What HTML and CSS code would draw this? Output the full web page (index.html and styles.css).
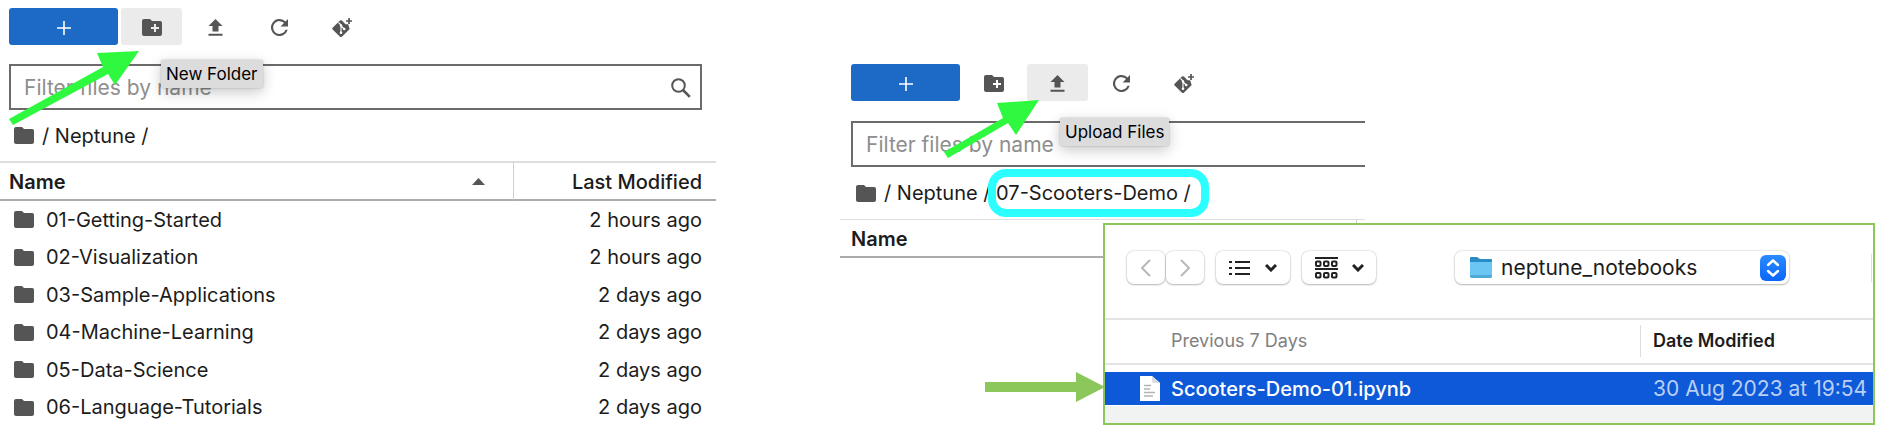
FILE: index.html
```html
<!DOCTYPE html>
<html lang="en">
<head>
<meta charset="utf-8">
<title>Neptune notebooks</title>
<link rel="stylesheet" href="styles.css">
</head>
<body>
<svg class="defs" aria-hidden="true">
  <symbol id="folder" viewBox="0 0 20 17"><path d="M2 0H8L10 2H18.200Q20 2 20 3.800V15Q20 17 18 17H2Q0 17 0 15V2Q0 0 2 0Z"/></symbol>
  <symbol id="new-folder" viewBox="0 0 20 17"><path fill-rule="evenodd" d="M2 0H8L10 2H18.200Q20 2 20 3.800V15Q20 17 18 17H2Q0 17 0 15V2Q0 0 2 0ZM12 5V8H9V10H12V13H14V10H17V8H14V5Z"/></symbol>
  <symbol id="upload" viewBox="0 0 15 17"><path d="M4.500 12.500V7H0.500L7.500 0L14.500 7H10.500V12.500ZM0.500 14.800H14.500V16.800H0.500Z"/></symbol>
  <symbol id="refresh" viewBox="4 4 16 16"><path d="M17.650 6.350A8 8 0 1 0 19.730 14H17.650A6 6 0 1 1 12 6c1.660 0 3.140.690 4.220 1.780L13 11h7V4z"/></symbol>
  <symbol id="git" viewBox="0 0 23 20"><path d="M8 2.600Q9 1.800 9.900 2.600L13.500 6.200H16.200L17.200 9.800Q18 10.700 17.200 11.600L9.900 18.800Q9 19.600 8 18.800L.6 11.500Q-.2 10.600 .6 9.700Z"/><path d="M6.500 4.500L9 7V15M9.200 8L12.200 11" fill="none" stroke="#fff" stroke-width="1.100"/><circle cx="9" cy="7.500" r="1.200" fill="#fff"/><circle cx="9" cy="14.800" r="1.300" fill="#fff"/><circle cx="12.200" cy="11" r="1.300" fill="#fff"/><path d="M16.200 0H17.900V2.200H20V3.800H17.900V6H16.200V3.800H14V2.200H16.200Z"/></symbol>
</svg>
<main class="stage">
  <section class="browser">
    <div class="toolbar">
      <button class="tool primary" aria-label="New launcher"><svg width="14" height="14" viewBox="0 0 14 14"><path d="M7 0V14M0 7H14" fill="none" stroke="#fff" stroke-width="1.600"/></svg></button>
      <button class="tool active" aria-label="New Folder"><svg width="20" height="17"><use href="#new-folder"/></svg></button>
      <button class="tool" aria-label="Upload Files"><svg width="15" height="17"><use href="#upload"/></svg></button>
      <button class="tool" aria-label="Refresh"><svg width="17" height="17"><use href="#refresh"/></svg></button>
      <button class="tool" aria-label="Git clone"><svg width="23" height="20"><use href="#git"/></svg></button>
    </div>
    <div class="filter">
      <input type="text" placeholder="Filter files by name" aria-label="Filter files by name">
      <svg class="lens" width="20" height="20" viewBox="0 0 20 20"><circle cx="7.500" cy="7.500" r="6.300" fill="none" stroke="#555" stroke-width="2"/><path d="M12 12L18.800 18.800" stroke="#555" stroke-width="2.600"/></svg>
    </div>
    <nav class="crumbs"><svg width="20" height="17"><use href="#folder"/></svg><span>/ Neptune /</span></nav>
    <table class="files">
      <thead><tr><th class="name"><div class="sort"><span>Name</span><svg width="13" height="7" viewBox="0 0 13 7"><path d="M0 7L6.500 0L13 7Z"/></svg></div></th><th class="date">Last Modified</th></tr></thead>
      <tbody>
        <tr><td><div class="file"><svg width="20" height="17"><use href="#folder"/></svg>01-Getting-Started</div></td><td class="date">2 hours ago</td></tr>
        <tr><td><div class="file"><svg width="20" height="17"><use href="#folder"/></svg>02-Visualization</div></td><td class="date">2 hours ago</td></tr>
        <tr><td><div class="file"><svg width="20" height="17"><use href="#folder"/></svg>03-Sample-Applications</div></td><td class="date">2 days ago</td></tr>
        <tr><td><div class="file"><svg width="20" height="17"><use href="#folder"/></svg>04-Machine-Learning</div></td><td class="date">2 days ago</td></tr>
        <tr><td><div class="file"><svg width="20" height="17"><use href="#folder"/></svg>05-Data-Science</div></td><td class="date">2 days ago</td></tr>
        <tr><td><div class="file"><svg width="20" height="17"><use href="#folder"/></svg>06-Language-Tutorials</div></td><td class="date">2 days ago</td></tr>
      </tbody>
    </table>
    <div class="tooltip tip-folder" role="tooltip">New Folder</div>
    <svg class="pointer pointer-folder" width="132" height="80" viewBox="0 0 132 80"><path d="M-1 70L93 18L87 4L129 2L105 36L98 25L3 76Z"/></svg>
  </section>

  <div class="demo">
    <section class="browser cropped">
      <div class="toolbar">
        <button class="tool primary" aria-label="New launcher"><svg width="14" height="14" viewBox="0 0 14 14"><path d="M7 0V14M0 7H14" fill="none" stroke="#fff" stroke-width="1.600"/></svg></button>
        <button class="tool" aria-label="New Folder"><svg width="20" height="17"><use href="#new-folder"/></svg></button>
        <button class="tool active" aria-label="Upload Files"><svg width="15" height="17"><use href="#upload"/></svg></button>
        <button class="tool" aria-label="Refresh"><svg width="17" height="17"><use href="#refresh"/></svg></button>
        <button class="tool" aria-label="Git clone"><svg width="23" height="20"><use href="#git"/></svg></button>
      </div>
      <div class="filter"><input type="text" placeholder="Filter files by name" aria-label="Filter files by name"></div>
      <nav class="crumbs"><svg width="20" height="17"><use href="#folder"/></svg><span>/ Neptune / <span class="current">07-Scooters-Demo /</span></span></nav>
      <table class="files">
        <thead><tr><th class="name">Name</th><th class="rest"></th></tr></thead>
      </table>
    </section>
    <div class="tooltip tip-upload" role="tooltip">Upload Files</div>
    <svg class="pointer pointer-upload" width="98" height="60" viewBox="0 0 98 60"><path d="M1 53L60 19L54 4L96 1L73 36L65 24L5 59Z"/></svg>

    <section class="dialog" aria-label="Choose a file">
      <div class="dialog-bar">
        <div class="history">
          <button class="mac" aria-label="Back"><svg width="10" height="18" viewBox="0 0 10 18"><path d="M9 1L1 9L9 17" class="faint"/></svg></button>
          <button class="mac" aria-label="Forward"><svg width="10" height="18" viewBox="0 0 10 18"><path d="M1 1L9 9L1 17" class="faint"/></svg></button>
        </div>
        <button class="mac wide" aria-label="List view">
          <svg width="22" height="16" viewBox="0 0 22 16"><path d="M6 2H21M6 8H21M6 14H21M0 2H3M0 8H3M0 14H3" class="stroke"/></svg>
          <svg width="12" height="8" viewBox="0 0 12 8"><path d="M1 1L6 6L11 1" class="chevron"/></svg>
        </button>
        <button class="mac wide" aria-label="Group items">
          <svg width="23" height="22" viewBox="0 0 23 22"><path d="M0 1H23M0 12H23" class="stroke"/><g class="cells"><rect x="1" y="4.500" width="4.500" height="4.500" rx="1"/><rect x="9" y="4.500" width="4.500" height="4.500" rx="1"/><rect x="17" y="4.500" width="4.500" height="4.500" rx="1"/><rect x="1" y="16" width="4.500" height="4.500" rx="1"/><rect x="9" y="16" width="4.500" height="4.500" rx="1"/><rect x="17" y="16" width="4.500" height="4.500" rx="1"/></g></svg>
          <svg width="12" height="8" viewBox="0 0 12 8"><path d="M1 1L6 6L11 1" class="chevron"/></svg>
        </button>
        <div class="place">
          <select aria-label="Folder"><option>neptune_notebooks</option></select>
          <svg class="place-folder" width="24" height="23" viewBox="0 0 24 23"><path d="M1 2Q1 1 2 1H8L11 3H22Q23 3 23 4V10H1Z" fill="#2a8cc4"/><path d="M1 6H23V20Q23 22 21 22H3Q1 22 1 20Z" fill="#6cc6f3"/><path d="M1 19H23V20Q23 22 21 22H3Q1 22 1 20Z" fill="#4ea9d6"/></svg>
          <svg class="place-arrows" width="26" height="26" viewBox="0 0 26 26"><defs><linearGradient id="blue" x2="0" y2="1"><stop stop-color="#2b8bff"/><stop offset="1" stop-color="#0a66f8"/></linearGradient></defs><rect width="26" height="26" rx="6" fill="url(#blue)"/><path d="M8 10L13 5.500L18 10M8 16L13 20.500L18 16" fill="none" stroke="#fff" stroke-width="2.400" stroke-linecap="round" stroke-linejoin="round"/></svg>
        </div>
        <div class="search-edge"></div>
      </div>
      <table class="picker">
        <thead><tr><th class="group">Previous 7 Days</th><th class="modified"><div>Date Modified</div></th></tr></thead>
        <tbody><tr><td><div class="picked"><svg width="20" height="25" viewBox="0 0 20 25"><path d="M0 0H12L20 7V25H0Z" fill="#fff"/><path d="M12 0V5Q12 7 14 7H20Z" fill="#d9dde2"/><path d="M4 9.500H11M4 13H10M4 16.500H15M4 20H13" stroke="#b3b3b3" stroke-width="1.300"/></svg>Scooters-Demo-01.ipynb</div></td><td class="when">30 Aug 2023 at 19:54</td></tr></tbody>
      </table>
      <div class="stripe"></div>
      <svg class="callout" width="120" height="30" viewBox="0 0 120 30"><path d="M0 10H91V0L120 15L91 30V20H0Z"/></svg>
    </section>
  </div>
</main>
</body>
</html>
```

FILE: styles.css
```css
* { box-sizing: border-box; }
body {
  margin: 0;
  background: #fff;
  color: #1c1c1c;
  font: 20px/24px Inter, "Liberation Sans", sans-serif;
}
svg { display: block; flex: none; }
.defs { position: absolute; width: 0; height: 0; }
button, input, select { font: inherit; color: inherit; margin: 0; }
table { border-collapse: separate; border-spacing: 0; width: 100%; }
th, td { padding: 0; text-align: left; }

.stage {
  display: grid;
  grid-template-columns: 716fr 1046fr;
  column-gap: 124px;
  overflow: hidden;
}
.browser { position: relative; padding-top: 8px; }
.toolbar { display: flex; gap: 3px; padding-left: 9px; }
.tool {
  display: flex;
  align-items: center;
  justify-content: center;
  width: 61px;
  height: 37px;
  padding: 2px 0 0;
  border: 0;
  border-radius: 3px;
  background: none;
  fill: #555;
}
.tool.primary { width: 109px; background: #1d69c6; }
.tool.active { background: #ebebeb; }

.filter { position: relative; margin: 19px 14px 0 9px; }
.filter input {
  display: block;
  width: 100%;
  height: 46px;
  padding: 0 48px 0 13px;
  border: 2px solid #6b6b6b;
  background: #fff;
  font-size: 21px;
  outline: 0;
}
.filter input::placeholder { color: #8e8e8e; opacity: 1; }
.lens { position: absolute; right: 11px; top: 14px; }

.crumbs {
  display: flex;
  align-items: center;
  gap: 8px;
  height: 51px;
  padding-left: 14px;
  fill: #555;
}
.files th {
  height: 40px;
  padding-top: 1px;
  border-top: 2px solid #dedede;
  border-bottom: 2px solid #ababab;
  font-weight: 600;
}
.files .name { padding-left: 9px; }
.files .date { width: 203px; padding-right: 14px; text-align: right; }
.files th.date { border-left: 1px solid #cfcfcf; font-weight: 500; }
.sort {
  display: flex;
  align-items: center;
  justify-content: space-between;
  padding-right: 28px;
  fill: #555;
}
.files td { height: 37px; }
.files tr:nth-child(even) td { height: 38px; }
.file { display: flex; align-items: center; gap: 12px; padding-left: 14px; fill: #555; }

.demo { position: relative; }
.cropped { width: 525px; padding-top: 64px; }
.cropped .toolbar { padding-left: 11px; }
.cropped .filter { margin: 20px 0 0 11px; }
.cropped .filter input { border-right: 0; }
.cropped .crumbs { padding-left: 16px; height: 52px; }
.cropped .files th { height: 39px; padding-top: 2px; border-top-width: 1px; }
.cropped .files .name { padding-left: 11px; }
.rest { width: 9px; border-left: 1px solid #cfcfcf; }
.current { position: relative; }
.current::after {
  content: "";
  position: absolute;
  inset: -12px -18px -12px -8px;
  border: 8px solid #2bffff;
  border-radius: 18px;
}

.tooltip {
  position: absolute;
  padding: 2px 5px;
  border-radius: 2px;
  background: #dcdcdc;
  box-shadow: 0 4px 14px rgba(0, 0, 0, .22), 0 0 2px rgba(0, 0, 0, .25);
  color: #000;
  font-size: 17px;
}
.tip-folder { left: 161px; top: 60px; }
.tip-upload { left: 220px; top: 118px; }
.pointer { position: absolute; fill: #2ff93f; overflow: visible; }
.pointer-folder { left: 10px; top: 49px; }
.pointer-upload { left: 103px; top: 99px; }

.dialog {
  position: absolute;
  left: 263px;
  right: 11px;
  top: 223px;
  border: 2px solid #8bc75a;
  background: #fff;
}
.dialog-bar {
  display: flex;
  align-items: center;
  gap: 12px;
  height: 95px;
  padding: 0 0 8px 22px;
  border-bottom: 2px solid #e4e4e4;
}
.history { display: flex; gap: 1px; }
.mac {
  display: flex;
  align-items: center;
  justify-content: center;
  width: 38px;
  height: 33px;
  padding: 0;
  border: 0;
  border-radius: 7px;
  background: #fff;
  box-shadow: 0 0 2px rgba(0, 0, 0, .25), 0 1px 2px rgba(0, 0, 0, .22);
}
.mac.wide { width: 74px; gap: 14px; }
.mac path, .mac rect { fill: none; }
.faint { stroke: #b9b9b9; stroke-width: 2; }
.stroke { stroke: #222; stroke-width: 2; }
.cells { stroke: #222; stroke-width: 2; }
.chevron { stroke: #222; stroke-width: 3; }
.place { position: relative; margin-left: 67px; flex: 0 0 334px; }
.place select {
  display: block;
  width: 100%;
  height: 33px;
  padding: 0 40px 0 46px;
  appearance: none;
  border: 0;
  border-radius: 7px;
  background: #fff;
  box-shadow: 0 0 2px rgba(0, 0, 0, .25), 0 1px 2px rgba(0, 0, 0, .22);
  font-size: 21px;
}
.place-folder { position: absolute; left: 14px; top: 5px; }
.place-arrows { position: absolute; right: 3px; top: 4px; }
.search-edge {
  width: 2px;
  height: 30px;
  margin-left: auto;
  border-left: 1px solid #e0e0e0;
  border-radius: 4px 0 0 4px;
}
.picker th {
  height: 45px;
  padding-bottom: 2px;
  border-bottom: 2px solid #e4e4e4;
  font-size: 18px;
  font-weight: 600;
}
.picker .group { padding-left: 66px; color: #808080; font-weight: 400; }
.modified { width: 233px; }
.modified div { padding: 4px 0 4px 12px; border-left: 1px solid #dedede; }
.picker tbody::before { content: ""; display: block; height: 7px; }
.picker td { height: 33px; background: #0d59d8; color: #fff; }
.picked { display: flex; align-items: center; gap: 11px; padding-left: 35px; font-weight: 500; }
.picker .when { padding-left: 13px; color: #b9cff5; font-size: 21px; white-space: nowrap; }
.stripe { height: 18px; border-top: 1px solid #fff; background: #f1f3f3; }
.callout { position: absolute; right: 100%; bottom: 21px; fill: #8bc75a; }
```
